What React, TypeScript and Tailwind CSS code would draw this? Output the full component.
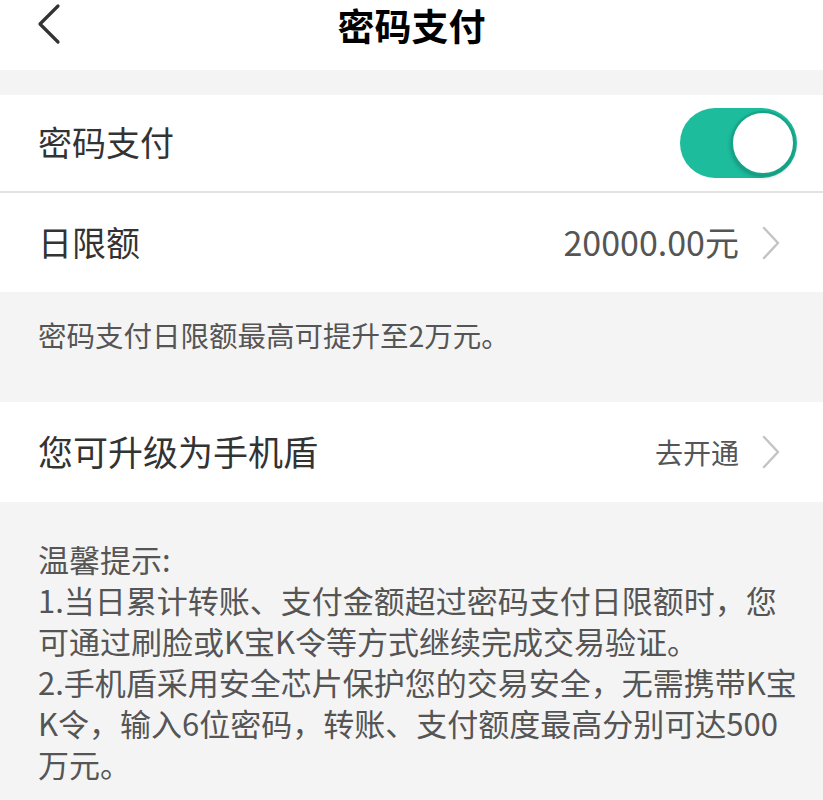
import React from 'react';

const font = { fontFamily: '"Noto Sans CJK SC", "Noto Sans", sans-serif' };

function Chevron() {
  return (
    <svg width="20" height="34" viewBox="0 0 20 34" className="shrink-0">
      <path d="M3 2 L17 17 L3 32" fill="none" stroke="#c4c4c4" strokeWidth="2.5" strokeLinecap="round" strokeLinejoin="round" />
    </svg>
  );
}

function Toggle() {
  return (
    <div className="relative w-[117px] h-[70px] rounded-full bg-[#1cbc9d]">
      <div className="absolute right-[2px] top-[3px] w-[64px] h-[64px] rounded-full bg-white border-2 border-[#16a386] shadow-[0_2px_4px_rgba(0,0,0,0.25)]" />
    </div>
  );
}

export default function App() {
  const tips = [
    '温馨提示:',
    '1.当日累计转账、支付金额超过密码支付日限额时，您',
    '可通过刷脸或K宝K令等方式继续完成交易验证。',
    '2.手机盾采用安全芯片保护您的交易安全，无需携带K宝',
    'K令，输入6位密码，转账、支付额度最高分别可达500',
    '万元。',
  ];

  return (
    <div className="w-[823px] h-[800px] overflow-hidden bg-[#f4f4f4]" style={font}>
      {/* header */}
      <div className="relative h-[70px] bg-white flex items-start justify-center">
        <svg width="30" height="44" viewBox="0 0 30 44" className="absolute left-[34px] top-[2px]">
          <path d="M24 4 L6 22 L24 40" fill="none" stroke="#333" strokeWidth="3.2" strokeLinecap="round" strokeLinejoin="round" />
        </svg>
        <h1 className="text-[37px] font-bold text-black leading-[46px] mt-[2px]">密码支付</h1>
      </div>

      <div className="h-[25px]" />

      {/* switch row */}
      <div className="h-[96px] bg-white flex items-center justify-between pl-[38px] pr-[26px]">
        <span className="text-[34px] text-[#333] mt-[-4px]">密码支付</span>
        <Toggle />
      </div>
      <div className="h-[2px] bg-[#e3e3e3]" />

      {/* limit row */}
      <div className="h-[99px] bg-white flex items-center justify-between pl-[38px] pr-[42px]">
        <span className="text-[34px] text-[#333] mt-[-3px]">日限额</span>
        <div className="flex items-center gap-[22px]">
          <span className="text-[34px] text-[#555] mt-[-3px]">20000.00元</span>
          <Chevron />
        </div>
      </div>

      <div className="h-[110px] px-[38px] pt-[23px]">
        <p className="text-[28.5px] text-[#555] leading-[40px]">密码支付日限额最高可提升至2万元。</p>
      </div>

      {/* upgrade row */}
      <div className="h-[100px] bg-white flex items-center justify-between pl-[38px] pr-[42px]">
        <span className="text-[35px] text-[#333] mt-[-2px]">您可升级为手机盾</span>
        <div className="flex items-center gap-[22px]">
          <span className="text-[28px] text-[#555]">去开通</span>
          <Chevron />
        </div>
      </div>

      {/* tips */}
      <div className="px-[38px] pt-[36px]">
        {tips.map((t) => (
          <div key={t} className="text-[31px] text-[#555] leading-[41px] whitespace-nowrap">
            {t}
          </div>
        ))}
      </div>
    </div>
  );
}
